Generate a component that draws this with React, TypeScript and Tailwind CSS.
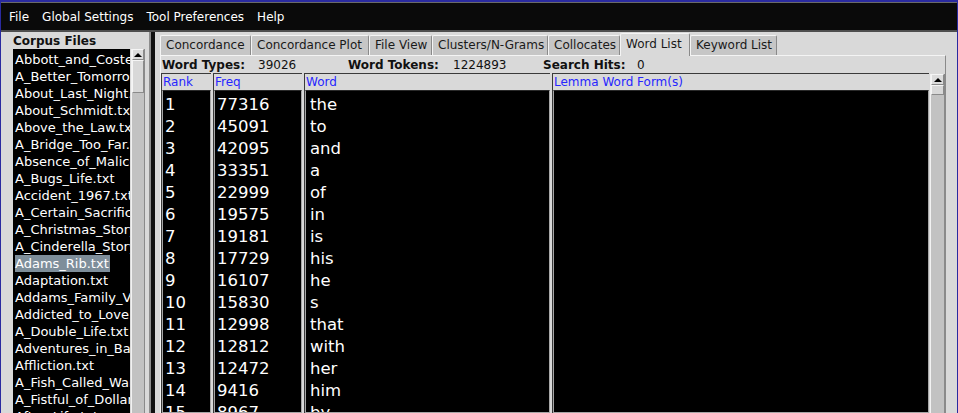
import React from 'react';

const files = [
    'Abbott_and_Costello_Meet_Frankenstein.txt',
    'A_Better_Tomorrow.txt',
    'About_Last_Night.txt',
    'About_Schmidt.txt',
    'Above_the_Law.txt',
    'A_Bridge_Too_Far.txt',
    'Absence_of_Malice.txt',
    'A_Bugs_Life.txt',
    'Accident_1967.txt',
    'A_Certain_Sacrifice.txt',
    'A_Christmas_Story.txt',
    'A_Cinderella_Story.txt',
    'Adams_Rib.txt',
    'Adaptation.txt',
    'Addams_Family_Values.txt',
    'Addicted_to_Love.txt',
    'A_Double_Life.txt',
    'Adventures_in_Babysitting.txt',
    'Affliction.txt',
    'A_Fish_Called_Wanda.txt',
    'A_Fistful_of_Dollars.txt',
    'After_Life.txt',
];

const rows: [number, number, string][] = [
    [1, 77316, 'the'],
    [2, 45091, 'to'],
    [3, 42095, 'and'],
    [4, 33351, 'a'],
    [5, 22999, 'of'],
    [6, 19575, 'in'],
    [7, 19181, 'is'],
    [8, 17729, 'his'],
    [9, 16107, 'he'],
    [10, 15830, 's'],
    [11, 12998, 'that'],
    [12, 12812, 'with'],
    [13, 12472, 'her'],
    [14, 9416, 'him'],
    [15, 8967, 'by'],
    [16, 8650, 'for'],
];

const tabs = [
    { label: 'Concordance', w: 'w-[91px]' },
    { label: 'Concordance Plot', w: 'w-[118px]' },
    { label: 'File View', w: 'w-[63px]' },
    { label: 'Clusters/N-Grams', w: 'w-[116px]' },
    { label: 'Collocates', w: 'w-[72px]' },
    { label: 'Word List', w: 'w-[70px]', active: true },
    { label: 'Keyword List', w: 'w-[87px]' },
];

// vertical scrollbar with up arrow + thumb
const ScrollBar: React.FC<{ thumb: string }> = ({ thumb }) => (
    <div className="flex flex-col h-full bg-[#c2c2c2] border-l border-[#f2f2f2] border-r border-r-[#8a8a8a]">
        <div className="h-[11px] bg-[#dcdcdc] border border-[#8a8a8a] border-t-[#f5f5f5] border-l-[#f5f5f5] flex items-center justify-center">
            <div className="w-0 h-0 border-l-[4px] border-r-[4px] border-b-[4px] border-l-transparent border-r-transparent border-b-black" />
        </div>
        <div className={`${thumb} bg-[#d8d8d8] border border-[#8a8a8a] border-t-[#f5f5f5] border-l-[#f5f5f5]`} />
    </div>
);

const Column: React.FC<{ title: string; w: string; pad?: string; cells?: (string | number)[] }> = ({ title, w, pad = 'pl-[2px]', cells }) => (
    <div className={`${w} flex flex-col shrink-0 border-t border-l border-[#3a3a3a]`}>
        <div className="h-[16px] text-[12px] leading-[16px] text-[#2626ff] pl-[1px] whitespace-nowrap overflow-hidden">{title}</div>
        <div className={`flex-1 bg-black border border-[#a6a6a6] border-t-[#2a2a2a] pt-[3px] ${pad} overflow-hidden`}>
            {cells?.map((c, i) => (
                <div key={i} className="h-[22px] leading-[22px] text-[16.5px] text-white whitespace-nowrap">{c}</div>
            ))}
        </div>
    </div>
);

export default function App() {
    return (
        <div className="w-[958px] h-[413px] overflow-hidden flex flex-col bg-[#d9d9d9] border-x border-t-2 border-[#2a2aa0] font-['DejaVu_Sans',sans-serif]">
            {/* Menu bar */}
            <div className="h-[30px] shrink-0 bg-[#0a0a0a] border-t border-t-[#6a6a6a] border-b-2 border-b-[#4e4e4e] flex items-center pl-[8px] gap-[13px] text-white text-[12px]">
                <span>File</span>
                <span>Global Settings</span>
                <span>Tool Preferences</span>
                <span>Help</span>
            </div>

            <div className="flex-1 flex min-h-0">
                {/* Corpus files */}
                <div className="w-[148px] shrink-0 flex flex-col pl-[12px] pt-[2px]">
                    <div className="h-[15px] leading-[15px] text-[12px] font-bold text-[#111]">Corpus Files</div>
                    <div className="flex-1 flex min-h-0 gap-[1px]">
                        <div className="w-[117px] bg-black pt-[2px] pl-[2px] overflow-hidden">
                            {files.map((f, i) => (
                                <div key={i} className="h-[17px] leading-[17px] text-[13px] text-white whitespace-nowrap">
                                    <span className={i === 12 ? 'bg-[#7e8e9a] inline-block pr-[1px]' : ''}>{f}</span>
                                </div>
                            ))}
                        </div>
                        <div className="w-[14px]">
                            <ScrollBar thumb="h-[33px]" />
                        </div>
                    </div>
                </div>

                {/* Split pane divider */}
                <div className="w-[2px] bg-[#8c8c8c] shrink-0" />
                <div className="w-[4px] bg-[#111] shrink-0" />

                {/* Tabbed pane */}
                <div className="flex-1 flex flex-col pl-[5px] pr-[11px] min-w-0">
                    <div className="h-[23px] shrink-0 flex items-end">
                        {tabs.map((t) => (
                            <div
                                key={t.label}
                                className={`${t.w} shrink-0 border-t border-l border-[#f4f4f4] border-r border-r-[#8a8a8a] rounded-t-[2px] text-[12px] text-[#1a1a1a] pl-[5px] whitespace-nowrap overflow-hidden ${
                                    t.active ? 'h-[23px] leading-[21px] bg-[#d9d9d9] relative z-10 -mb-px' : 'h-[20px] leading-[19px] bg-[#c6c6c6]'
                                }`}
                            >
                                {t.label}
                            </div>
                        ))}
                    </div>

                    <div className="flex-1 flex flex-col min-h-0 bg-[#d9d9d9] border-t border-l border-[#f4f4f4] border-r border-r-[#8a8a8a]">
                        {/* Totals */}
                        <div className="h-[17px] shrink-0 flex items-center text-[12px] text-[#111] pl-[1px] whitespace-nowrap">
                            <span className="w-[96px] font-bold">Word Types:</span>
                            <span className="w-[90px]">39026</span>
                            <span className="w-[105px] font-bold">Word Tokens:</span>
                            <span className="w-[90px]">1224893</span>
                            <span className="w-[94px] font-bold">Search Hits:</span>
                            <span>0</span>
                        </div>

                        {/* Word list table */}
                        <div className="flex-1 flex min-h-0">
                            <Column title="Rank" w="w-[50px]" cells={rows.map((r) => r[0])} />
                            <div className="w-[2px] shrink-0" />
                            <Column title="Freq" w="w-[89px]" cells={rows.map((r) => r[1])} />
                            <div className="w-[2px] shrink-0" />
                            <Column title="Word" w="w-[246px]" pad="pl-[4px]" cells={rows.map((r) => r[2])} />
                            <div className="w-[2px] shrink-0" />
                            <Column title="Lemma Word Form(s)" w="w-[377px]" />
                            <div className="w-[15px] shrink-0 ml-[1px] pt-[1px]">
                                <ScrollBar thumb="h-[10px]" />
                            </div>
                        </div>
                    </div>
                </div>
            </div>
        </div>
    );
}
